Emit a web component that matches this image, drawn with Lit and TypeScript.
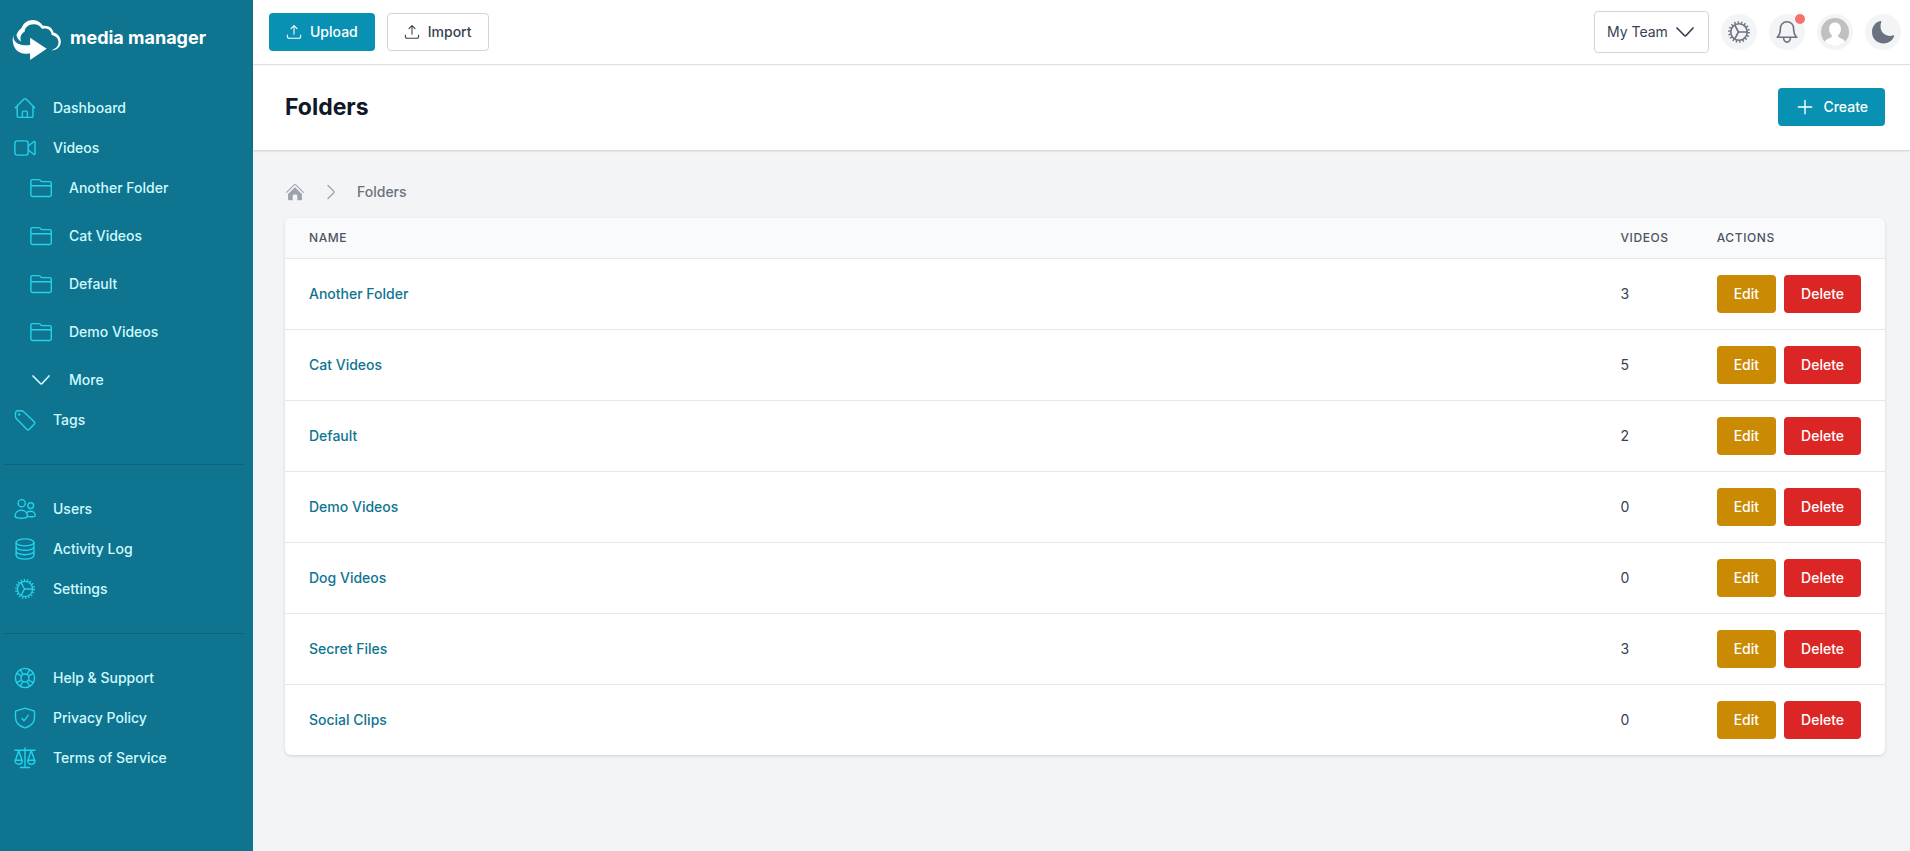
import { LitElement, html, css, svg, nothing } from "lit";
import { customElement, property } from "lit/decorators.js";

const gear = svg`
  <circle cx="12" cy="12" r="7.600"></circle>
  <circle cx="12" cy="12" r="9" stroke-width="2" stroke-dasharray="1.300 1.842"></circle>
  <path d="M11.500 12H19.500M11.500 12 8 5.400M11.500 12 8 18.600"></path>`;

const icons: Record<string, unknown> = {
  home: svg`<path d="M2.3 11.7 11 3.1a1.4 1.4 0 0 1 2 0l8.7 8.6M4.2 10v10a1.4 1.4 0 0 0 1.4 1.4h13a1.4 1.4 0 0 0 1.4-1.4V10M9.4 21.4v-5a1.3 1.3 0 0 1 1.3-1.3h2.4a1.3 1.3 0 0 1 1.3 1.3v5"></path>`,
  video: svg`<rect x="1.9" y="4.9" width="13.3" height="14.2" rx="2.6"></rect><path d="m15.4 10 5.2-4.2a.8.8 0 0 1 1.4.6v11.2a.8.8 0 0 1-1.4.6L15.4 14"></path>`,
  folder: svg`<path d="M1.9 9.8V5a1.4 1.4 0 0 1 1.4-1.4h6.4a2 2 0 0 1 1.2.5l1.6 1.5h8.4a1.4 1.4 0 0 1 1.4 1.4v12.1a1.4 1.4 0 0 1-1.4 1.4H3.3a1.4 1.4 0 0 1-1.4-1.4V11.200a1.400 1.400 0 0 1 1.400-1.400h17.600a1.400 1.400 0 0 1 1.400 1.400"></path>`,
  chevronDown: svg`<path d="m4 8 7.400 7.500a1.200 1.200 0 0 0 1.700 0L20 8"></path>`,
  chevronRight: svg`<path d="m7 3.500 5.800 5.800a1 1 0 0 1 0 1.400l-5.800 5.800"></path>`,
  tag: svg`<path d="M2.500 8.800V5a2.200 2.200 0 0 1 2.200-2.200h3.900a2.600 2.600 0 0 1 1.800.8l11 10.400a1.500 1.500 0 0 1 0 2.100l-5.300 5.300a1.500 1.500 0 0 1-2.100 0L3.300 10.600a2.600 2.600 0 0 1-.8-1.800Z"></path><circle cx="6.200" cy="6.400" r=".5"></circle>`,
  users: svg`<circle cx="8.700" cy="6.200" r="3.600"></circle><circle cx="17.700" cy="8.600" r="2.900"></circle><path d="M8.300 13.300c3.700 0 6.100 2.500 6.100 6 0 .9-2.600 1.900-6.100 1.900s-6.200-.9-6.200-1.900c0-3.500 2.500-6 6.200-6ZM13.900 15.500c.9-.8 2.200-1.200 3.700-1.200 2.700 0 4.600 1.800 4.600 4.100 0 .8-2 1.400-4.600 1.400-1.200 0-2.300-.1-3.200-.4"></path>`,
  database: svg`<ellipse cx="12" cy="5.400" rx="8.900" ry="3.500"></ellipse><path d="M3.100 5.400v13.200c0 2 4 3.500 8.900 3.500s8.900-1.500 8.900-3.500V5.400M3.100 9.800c0 2 4 3.500 8.900 3.500s8.900-1.500 8.900-3.500M3.100 14.200c0 2 4 3.500 8.900 3.500s8.900-1.500 8.900-3.500"></path>`,
  gear,
  support: svg`<circle cx="12" cy="12" r="9.600"></circle><circle cx="12" cy="12" r="4"></circle><path d="m7.300 3.700 2.600 4.800M3.700 7.300l4.800 2.600M16.700 3.700l-2.600 4.800M20.300 7.300l-4.800 2.600M7.300 20.300l2.600-4.800M3.700 16.700l4.800-2.600M16.700 20.300l-2.600-4.800M20.300 16.700l-4.800-2.600"></path>`,
  shield: svg`<path d="M2.500 5.900a1 1 0 0 1 .7-1l8.200-2.600a2 2 0 0 1 1.200 0l8.200 2.600a1 1 0 0 1 .7 1v5.500c0 5.800-4.600 8.800-8.800 10.300a2 2 0 0 1-1.400 0C7.100 20.200 2.500 17.200 2.500 11.400Z"></path><path d="m9 12.500 2 2.300 4.200-5.500"></path>`,
  scales: svg`<path d="M2 4.300h20M12 2v19.500M7.500 21.500h9M5.800 4.600 2.500 14.200M5.800 4.600l3.200 9.600M18.200 4.600l-3.200 9.600M18.200 4.600l3.300 9.600M2 14.200h7.300c0 2.500-1.500 4-3.600 4S2 16.700 2 14.200ZM14.700 14.200H22c0 2.500-1.500 4-3.700 4s-3.600-1.500-3.600-4Z"></path>`,
  bell: svg`<path d="M12 1.800c4 0 6.600 3 6.600 6.600 0 5 1.200 7 3.200 8.900H2.200c2-1.900 3.200-3.900 3.200-8.900 0-3.600 2.600-6.600 6.600-6.600ZM8.600 17.500a3.400 4.600 0 0 0 6.800 0"></path>`,
  moon: svg`<path fill="currentColor" stroke="none" d="M9.600 1C4.600 2 1 6 1 12c0 7 5.300 11.400 11.500 11.400 5 0 8.900-2.600 10.700-7.400.2-.6-.2-.9-.8-.7C14.500 18 7 11.500 10.300 1.800c.2-.5-.2-.9-.7-.8Z"></path>`,
  upload: svg`<path d="M12 15.500V3M7.500 7 12 2.500 16.500 7M2 16.500v1.800c0 1.700 1.200 3.200 3.200 3.200h13.600c2 0 3.200-1.500 3.200-3.200v-1.800"></path>`,
  plus: svg`<path d="M12 4v16M4 12h16"></path>`,
  homeSolid: svg`<g stroke="none" fill="currentColor"><path d="M12 6.200 3.700 14.400V21c0 .6.400 1 1 1h4.500v-5.200c0-1 .8-1.800 1.800-1.800h2c1 0 1.800.8 1.800 1.800V22h4.500c.6 0 1-.4 1-1v-6.600Z"></path></g><path d="M2 12.500 11 3.500a1.400 1.400 0 0 1 2 0l9 9"></path>`,
};

/* Draws one line icon; its colour and size come from the surrounding text. */
@customElement("mm-icon")
class MmIcon extends LitElement {
  @property() name = "";
  @property() box = "0 0 24 24";
  static styles = css`
    :host { display: block; flex: none; width: 24px; height: 24px; }
    .glyph { display: block; width: 100%; height: 100%; fill: none; stroke: currentColor;
      stroke-width: var(--icon-stroke, 1.4); stroke-linecap: round; stroke-linejoin: round; }
    .butt { stroke-linecap: butt; }
  `;
  render() {
    return html`<svg class="glyph ${this.name === "gear" ? "butt" : ""}" viewBox=${this.box} aria-hidden="true">${icons[this.name] ?? nothing}</svg>`;
  }
}

type Item = { label: string; icon: string; children?: string[] };

const sections: Item[][] = [
  [
    { label: "Dashboard", icon: "home" },
    { label: "Videos", icon: "video", children: ["Another Folder", "Cat Videos", "Default", "Demo Videos"] },
    { label: "Tags", icon: "tag" },
  ],
  [
    { label: "Users", icon: "users" },
    { label: "Activity Log", icon: "database" },
    { label: "Settings", icon: "gear" },
  ],
  [
    { label: "Help & Support", icon: "support" },
    { label: "Privacy Policy", icon: "shield" },
    { label: "Terms of Service", icon: "scales" },
  ],
];

@customElement("mm-sidebar")
class MmSidebar extends LitElement {
  static styles = css`
    :host { display: block; flex: none; width: 253px; background: #0e7490; color: #cffafe; }
    .brand { display: flex; align-items: center; gap: 8px; padding: 18px 12px 26px; color: #fff; text-decoration: none;
      font-size: 18px; line-height: 40px; font-weight: 700; }
    .logo { width: 50px; height: 44px; flex: none; fill: #fff; }
    .brand-name { padding-bottom: 4px; }
    .nav { padding: 0 8px 24px 4px; }
    .list { list-style: none; margin: 0; padding: 0; }
    .sub { display: grid; gap: 8px; padding-left: 16px; }
    .rule { border: 0; border-top: 1px solid #155e75; opacity: .8; margin: 24px 0; }
    .link { box-sizing: border-box; display: flex; align-items: center; gap: 16px; width: 100%; height: 40px; padding: 0 8px 0 9px;
      border: 0; background: none; color: inherit; font: 500 14px/20px Inter, "Liberation Sans", sans-serif; text-decoration: none; cursor: pointer; }
    .icon { color: #22d3ee; }
    .icon-light { --icon-stroke: 1.7; }
  `;
  private link(label: string, icon: string) {
    return html`<a class="link" href="#"><mm-icon class="icon" name=${icon}></mm-icon>${label}</a>`;
  }
  render() {
    return html`
      <a class="brand" href="#">
        <svg class="logo" viewBox="12 18 50 44" aria-hidden="true">
          <path d="M21 41.500c-2.400-1.800-4-3.700-4.600-6.300 1.100-3.200 2.600-5.300 5-7C23.300 22.900 28 19.800 33 20c4.400.2 7.800 2.400 9.900 5.800 5.300-.9 9.500 2 10.600 6.600 4.400 1.200 7.500 5 7.300 9.500-.2 4.800-3.800 8.100-9.600 8.500 4.300-1.300 7-4 7.300-7.600.3-3.800-2.300-7-6.900-7.900-.2-4.700-4.100-7.400-9.500-6-1.700-3-4.800-4.800-8.600-4.700-5 .1-8.700 3.300-8.900 7.600-3.600 1.700-5 5.800-3.500 9.700Z"></path>
          <path d="M13.400 34.500c-.8 5.400 2.600 9.600 9 10.500 2.400.3 4.900.2 7.700 0v-7.300L46.700 48.800 30.100 60v-6.400c-6.600.6-12-.8-14.900-5.200-2.900-4.300-2.900-9.400-1.800-13.900Z"></path>
        </svg>
        <span class="brand-name">media manager</span>
      </a>
      <nav class="nav" aria-label="Main">
        ${sections.map((items, i) => html`
          ${i ? html`<hr class="rule">` : nothing}
          <ul class="list">
            ${items.map((it) => html`<li>${this.link(it.label, it.icon)}
              ${it.children ? html`<ul class="list sub">
                ${it.children.map((c) => html`<li>${this.link(c, "folder")}</li>`)}
                <li><button class="link"><mm-icon class="icon-light" name="chevronDown"></mm-icon>More</button></li>
              </ul>` : nothing}</li>`)}
          </ul>`)}
      </nav>`;
  }
}

const folders: [string, number][] = [
  ["Another Folder", 3], ["Cat Videos", 5], ["Default", 2], ["Demo Videos", 0],
  ["Dog Videos", 0], ["Secret Files", 3], ["Social Clips", 0],
];

@customElement("app-root")
class AppRoot extends LitElement {
  static styles = css`
    :host { display: flex; min-height: 100vh; background: #f3f4f6; color: #374151;
      font: 400 14px/20px Inter, "Liberation Sans", sans-serif; }
    .page { flex: 1; min-width: 0; }
    .topbar { position: relative; z-index: 1; box-sizing: border-box; display: flex; align-items: center; justify-content: space-between;
      height: 64px; padding: 0 9px 0 16px; background: #fff; box-shadow: 0 1px 1px rgba(0,0,0,.12); }
    .group { display: flex; align-items: center; gap: 12px; }
    .btn { display: inline-flex; align-items: center; gap: 8px; padding: 8px 16px; border: 1px solid transparent; border-radius: 4px;
      color: #fff; font: 500 14px/20px Inter, "Liberation Sans", sans-serif; cursor: pointer; white-space: nowrap; }
    .primary { background: #0891b2; }
    .plain { background: #fff; border-color: #d1d5db; color: #374151; }
    .edit { background: #ca8a04; }
    .delete { background: #dc2626; }
    .icon-sm { width: 16px; height: 16px; --icon-stroke: 1.6; }
    .icon-md { width: 20px; height: 20px; --icon-stroke: 1.7; }
    .team { display: grid; align-items: center; }
    .team-select { grid-area: 1 / 1; appearance: none; height: 42px; margin: 0; padding: 0 40px 0 12px; border: 1px solid #d1d5db;
      border-radius: 4px; background: #fff; color: #374151; font: inherit; }
    .team-arrow { grid-area: 1 / 1; justify-self: end; margin-right: 12px; pointer-events: none; --icon-stroke: 1.7; }
    .round { position: relative; display: grid; place-items: center; width: 36px; height: 36px; padding: 0; border: 0; border-radius: 50%;
      background: #f3f4f6; color: #6b7280; cursor: pointer; }
    .round-icon { --icon-stroke: 1.6; }
    .round-gear { width: 26px; height: 26px; --icon-stroke: 1.5; }
    .dot { position: absolute; top: 0; right: 0; width: 10px; height: 10px; border-radius: 50%; background: #f87171; }
    .avatar { width: 28px; height: 28px; }
    .actions { padding-bottom: 1px; }
    .heading { display: flex; align-items: center; justify-content: space-between; padding: 24px 25px 24px 32px; background: #fff;
      box-shadow: 0 1px 2px rgba(0,0,0,.16); }
    .title { margin: 0; color: #111827; font-size: 23px; line-height: 32px; font-weight: 700; }
    .content { padding: 32px 25px 32px 32px; }
    .crumbs { display: flex; align-items: center; gap: 16px; margin: 0 0 16px; padding: 0; list-style: none; color: #6b7280; font-weight: 500; }
    .crumb-icon { width: 20px; height: 20px; color: #9ca3af; --icon-stroke: 1.3; }
    .crumb { color: inherit; text-decoration: none; }
    .card { overflow: hidden; border-radius: 6px; background: #fff; box-shadow: 0 1px 3px rgba(0,0,0,.14); }
    .table { width: 100%; border-collapse: separate; border-spacing: 0; text-align: left; }
    .th { padding: 12px 24px; border-bottom: 1px solid #e5e7eb; background: #f9fafb; color: #4b5563; font-size: 12px; line-height: 16px;
      font-weight: 500; letter-spacing: .05em; text-transform: uppercase; }
    .td { padding: 16px 24px; border-bottom: 1px solid #e5e7eb; }
    .row:last-child .td { border-bottom: 0; }
    .fit { width: 1px; white-space: nowrap; }
    .folder { color: #0e7490; font-weight: 500; text-decoration: none; }
    .buttons { display: flex; gap: 8px; }
  `;
  render() {
    return html`
      <mm-sidebar></mm-sidebar>
      <div class="page">
        <header class="topbar">
          <div class="group">
            <button class="btn primary"><mm-icon class="icon-sm" name="upload"></mm-icon>Upload</button>
            <button class="btn plain"><mm-icon class="icon-sm" name="upload"></mm-icon>Import</button>
          </div>
          <div class="group">
            <div class="team">
              <select class="team-select" aria-label="Team"><option>My Team</option></select>
              <mm-icon class="team-arrow" name="chevronDown"></mm-icon>
            </div>
            <div class="group actions">
              <button class="round" aria-label="Settings"><mm-icon class="round-gear" name="gear"></mm-icon></button>
              <button class="round" aria-label="Notifications"><mm-icon class="round-icon" name="bell"></mm-icon><span class="dot"></span></button>
              <button class="round" aria-label="Account">
                <svg class="avatar" viewBox="0 0 28 28" aria-hidden="true">
                  <defs><clipPath id="disc"><circle cx="14" cy="14" r="14"></circle></clipPath></defs>
                  <g clip-path="url(#disc)"><rect width="28" height="28" fill="#c0c0c0"></rect>
                  <path fill="#fff" d="M14 4.500c3.500 0 5.900 2.700 5.900 6.300 0 2.700-1 5-2.700 6.400v1.600c1.200 1.800 5.800 1.600 7.300 5.700V28h-21v-3.500c1.500-4.100 6.100-3.900 7.300-5.700v-1.600c-1.700-1.400-2.700-3.700-2.700-6.400 0-3.600 2.400-6.300 5.900-6.300Z"></path></g>
                </svg>
              </button>
              <button class="round" aria-label="Dark mode"><mm-icon name="moon"></mm-icon></button>
            </div>
          </div>
        </header>
        <div class="heading">
          <h1 class="title">Folders</h1>
          <button class="btn primary"><mm-icon class="icon-md" name="plus"></mm-icon>Create</button>
        </div>
        <main class="content">
          <nav aria-label="Breadcrumb">
            <ol class="crumbs">
              <li><a class="crumb" href="#" aria-label="Home"><mm-icon class="crumb-icon" name="homeSolid"></mm-icon></a></li>
              <li><mm-icon class="crumb-icon" name="chevronRight" box="0 0 20 20"></mm-icon></li>
              <li><a class="crumb" href="#">Folders</a></li>
            </ol>
          </nav>
          <div class="card">
            <table class="table">
              <thead><tr><th class="th">Name</th><th class="th fit">Videos</th><th class="th fit">Actions</th></tr></thead>
              <tbody>
                ${folders.map(([name, count]) => html`<tr class="row">
                  <td class="td"><a class="folder" href="#">${name}</a></td>
                  <td class="td">${count}</td>
                  <td class="td"><div class="buttons"><button class="btn edit">Edit</button><button class="btn delete">Delete</button></div></td>
                </tr>`)}
              </tbody>
            </table>
          </div>
        </main>
      </div>`;
  }
}
